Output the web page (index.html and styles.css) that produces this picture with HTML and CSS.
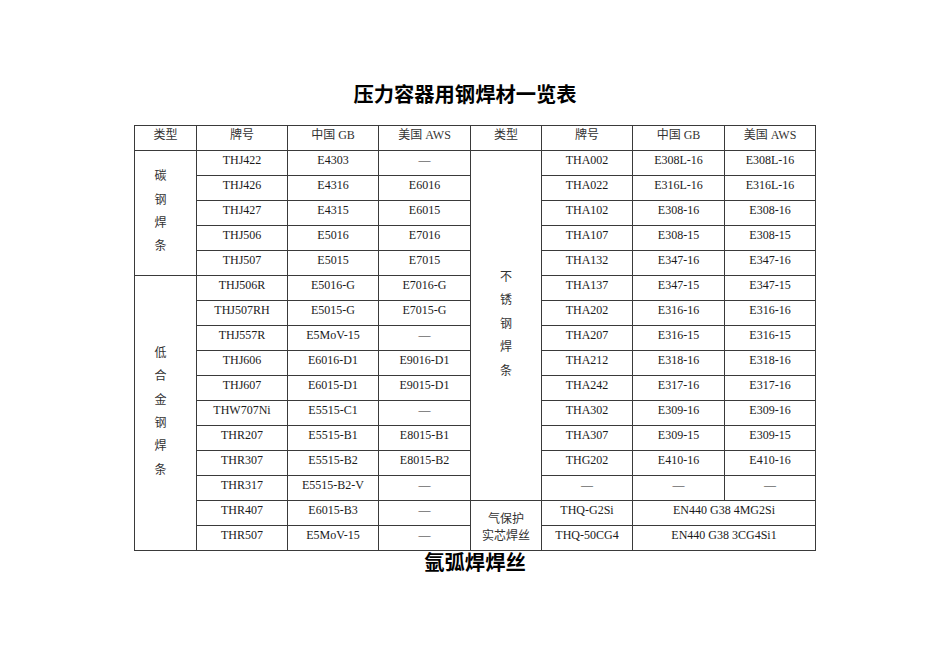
FILE: index.html
```html
<!DOCTYPE html>
<html lang="zh">
<head>
<meta charset="utf-8">
<link rel="stylesheet" href="styles.css">
</head>
<body>
<div class="page">
  <h1 class="title">压力容器用钢焊材一览表</h1>
  <table class="grid">
    <colgroup>
      <col class="c1"><col class="c2"><col class="c3"><col class="c4">
      <col class="c5"><col class="c6"><col class="c7"><col class="c8">
    </colgroup>
    <tr class="head">
      <td>类型</td><td>牌号</td><td>中国 GB</td><td>美国 AWS</td>
      <td>类型</td><td>牌号</td><td>中国 GB</td><td>美国 AWS</td>
    </tr>
    <tr>
      <td rowspan="5" class="vert vert-left"><div class="stack"><span>碳</span><span>钢</span><span>焊</span><span>条</span></div></td>
      <td>THJ422</td><td>E4303</td><td>—</td>
      <td rowspan="14" class="vert"><div class="stack"><span>不</span><span>锈</span><span>钢</span><span>焊</span><span>条</span></div></td>
      <td>THA002</td><td>E308L-16</td><td>E308L-16</td>
    </tr>
    <tr><td>THJ426</td><td>E4316</td><td>E6016</td><td>THA022</td><td>E316L-16</td><td>E316L-16</td></tr>
    <tr><td>THJ427</td><td>E4315</td><td>E6015</td><td>THA102</td><td>E308-16</td><td>E308-16</td></tr>
    <tr><td>THJ506</td><td>E5016</td><td>E7016</td><td>THA107</td><td>E308-15</td><td>E308-15</td></tr>
    <tr><td>THJ507</td><td>E5015</td><td>E7015</td><td>THA132</td><td>E347-16</td><td>E347-16</td></tr>
    <tr>
      <td rowspan="11" class="vert vert-left"><div class="stack"><span>低</span><span>合</span><span>金</span><span>钢</span><span>焊</span><span>条</span></div></td>
      <td>THJ506R</td><td>E5016-G</td><td>E7016-G</td><td>THA137</td><td>E347-15</td><td>E347-15</td>
    </tr>
    <tr><td>THJ507RH</td><td>E5015-G</td><td>E7015-G</td><td>THA202</td><td>E316-16</td><td>E316-16</td></tr>
    <tr><td>THJ557R</td><td>E5MoV-15</td><td>—</td><td>THA207</td><td>E316-15</td><td>E316-15</td></tr>
    <tr><td>THJ606</td><td>E6016-D1</td><td>E9016-D1</td><td>THA212</td><td>E318-16</td><td>E318-16</td></tr>
    <tr><td>THJ607</td><td>E6015-D1</td><td>E9015-D1</td><td>THA242</td><td>E317-16</td><td>E317-16</td></tr>
    <tr><td>THW707Ni</td><td>E5515-C1</td><td>—</td><td>THA302</td><td>E309-16</td><td>E309-16</td></tr>
    <tr><td>THR207</td><td>E5515-B1</td><td>E8015-B1</td><td>THA307</td><td>E309-15</td><td>E309-15</td></tr>
    <tr><td>THR307</td><td>E5515-B2</td><td>E8015-B2</td><td>THG202</td><td>E410-16</td><td>E410-16</td></tr>
    <tr><td>THR317</td><td>E5515-B2-V</td><td>—</td><td>—</td><td>—</td><td>—</td></tr>
    <tr>
      <td>THR407</td><td>E6015-B3</td><td>—</td>
      <td rowspan="2" class="gas"><div class="gas-lines"><span>气保护</span><span>实芯焊丝</span></div></td>
      <td>THQ-G2Si</td><td colspan="2">EN440 G38 4MG2Si</td>
    </tr>
    <tr><td>THR507</td><td>E5MoV-15</td><td>—</td><td>THQ-50CG4</td><td colspan="2">EN440 G38 3CG4Si1</td></tr>
  </table>
  <h2 class="subtitle">氩弧焊焊丝</h2>
</div>
</body>
</html>
```
FILE: styles.css
```css
html, body {
  margin: 0;
  padding: 0;
  background: #ffffff;
}

.page {
  width: 950px;
  height: 672px;
  padding-top: 81px;
  box-sizing: border-box;
  color: #111;
}

.title {
  margin: 0 0 16px 0;
  padding-right: 20px;
  text-align: center;
  font-family: "Liberation Sans", "Noto Sans CJK SC", sans-serif;
  font-weight: bold;
  font-size: 20.3px;
  line-height: 28px;
  color: #000;
}

.grid {
  width: 681px;
  margin: 0 auto;
  border-collapse: collapse;
  table-layout: fixed;
  font-family: "Liberation Serif", "Noto Sans CJK SC", serif;
  font-size: 12px;
  color: #1a1a1a;
}

.c1 { width: 62px; }
.c2 { width: 91px; }
.c3 { width: 91px; }
.c4 { width: 92px; }
.c5 { width: 71px; }
.c6 { width: 91px; }
.c7 { width: 92px; }
.c8 { width: 91px; }

.grid tr {
  height: 25px;
}

.grid td {
  border: 1px solid #3a3a3a;
  padding: 2px 2px 0 2px;
  vertical-align: top;
  text-align: center;
  line-height: 14px;
  white-space: nowrap;
}

.grid td.vert {
  vertical-align: middle;
  padding: 0 0 6px 0;
}

.grid td.vert-left {
  padding-right: 10px;
}

.stack {
  display: flex;
  flex-direction: column;
  align-items: center;
  font-family: "Noto Sans CJK SC", sans-serif;
  font-size: 12px;
  line-height: 23.4px;
  color: #333;
}

.grid td.gas {
  vertical-align: middle;
  padding: 0;
}

.gas-lines {
  display: flex;
  flex-direction: column;
  align-items: center;
  font-family: "Noto Sans CJK SC", sans-serif;
  font-size: 12px;
  line-height: 17px;
  color: #333;
}

.head td {
  font-family: "Liberation Serif", "Noto Sans CJK SC", serif;
  color: #333;
}

.subtitle {
  margin: 0;
  text-align: center;
  font-family: "Liberation Sans", "Noto Sans CJK SC", sans-serif;
  font-weight: bold;
  font-size: 20.3px;
  line-height: 24px;
  color: #000;
}
```
